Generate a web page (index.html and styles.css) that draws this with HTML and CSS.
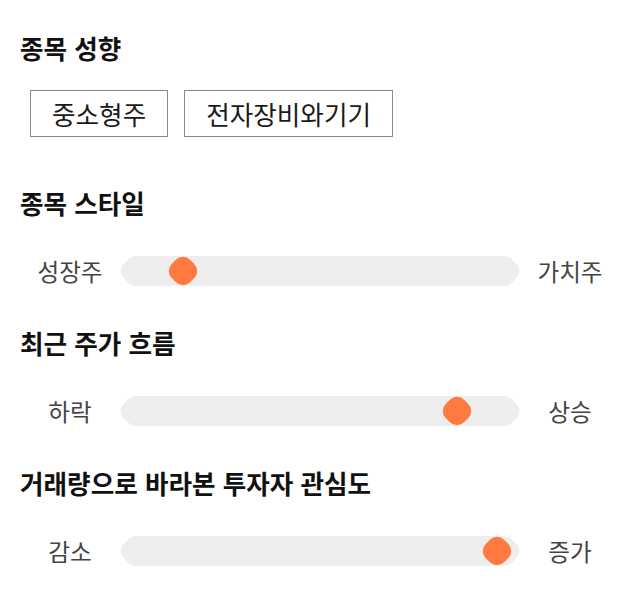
FILE: index.html
```html
<!DOCTYPE html>
<html lang="ko">
<head>
<meta charset="utf-8">
<title>종목 성향</title>
<link rel="stylesheet" href="styles.css">
</head>
<body>
<main class="page">
  <h2 class="title title-first">종목 성향</h2>
  <div class="tags">
    <span class="tag">중소형주</span>
    <span class="tag">전자장비와기기</span>
  </div>

  <h2 class="title title-after-tags">종목 스타일</h2>
  <div class="scale">
    <span class="scale-label">성장주</span>
    <div class="track"><div class="bar"></div><span class="thumb" style="--pos: 15.8%"></span></div>
    <span class="scale-label">가치주</span>
  </div>

  <h2 class="title">최근 주가 흐름</h2>
  <div class="scale">
    <span class="scale-label">하락</span>
    <div class="track"><div class="bar"></div><span class="thumb" style="--pos: 84.2%"></span></div>
    <span class="scale-label">상승</span>
  </div>

  <h2 class="title">거래량으로 바라본 투자자 관심도</h2>
  <div class="scale">
    <span class="scale-label">감소</span>
    <div class="track"><div class="bar"></div><span class="thumb" style="--pos: 94.2%"></span></div>
    <span class="scale-label">증가</span>
  </div>
</main>
</body>
</html>
```

FILE: styles.css
```css
html, body {
  margin: 0;
  padding: 0;
  background: #ffffff;
}

body {
  font-family: "Noto Sans CJK KR", "Noto Sans", sans-serif;
  color: #111111;
}

.page {
  display: flex;
  flex-direction: column;
  padding: 33px 20px 0 20px;
}

.title {
  margin: 42px 0 0 0;
  font-size: 25.6px;
  line-height: 29px;
  font-weight: 700;
  color: #111111;
}

.title-first {
  margin-top: 0;
}

.title-after-tags {
  margin-top: 51px;
}

.tags {
  display: flex;
  gap: 16px;
  margin-top: 28px;
  padding-left: 10px;
}

.tag {
  display: block;
  border: 1px solid #8a8a8a;
  padding: 9px 21px;
  font-size: 25.6px;
  line-height: 27px;
  color: #1a1a1a;
}

.scale {
  display: grid;
  grid-template-columns: 100px 1fr 100px;
  align-items: center;
  margin-top: 39px;
}

.scale-label {
  text-align: center;
  font-size: 23.6px;
  line-height: 30px;
  color: #444444;
}

.track {
  position: relative;
  height: 30px;
}

.bar {
  height: 30px;
  margin: 0 15px;
  background: #eeeeee;
}

.bar::before,
.bar::after {
  content: "";
  position: absolute;
  top: 2px;
  width: 26px;
  height: 26px;
  border-radius: 9px;
  background: #eeeeee;
  transform: rotate(45deg);
}

.bar::before {
  left: 2px;
}

.bar::after {
  right: 2px;
}

.thumb {
  position: absolute;
  top: 2px;
  left: calc(var(--pos) - 13px);
  width: 26px;
  height: 26px;
  border-radius: 10px;
  background: #ff7a40;
  transform: rotate(45deg);
}
```
